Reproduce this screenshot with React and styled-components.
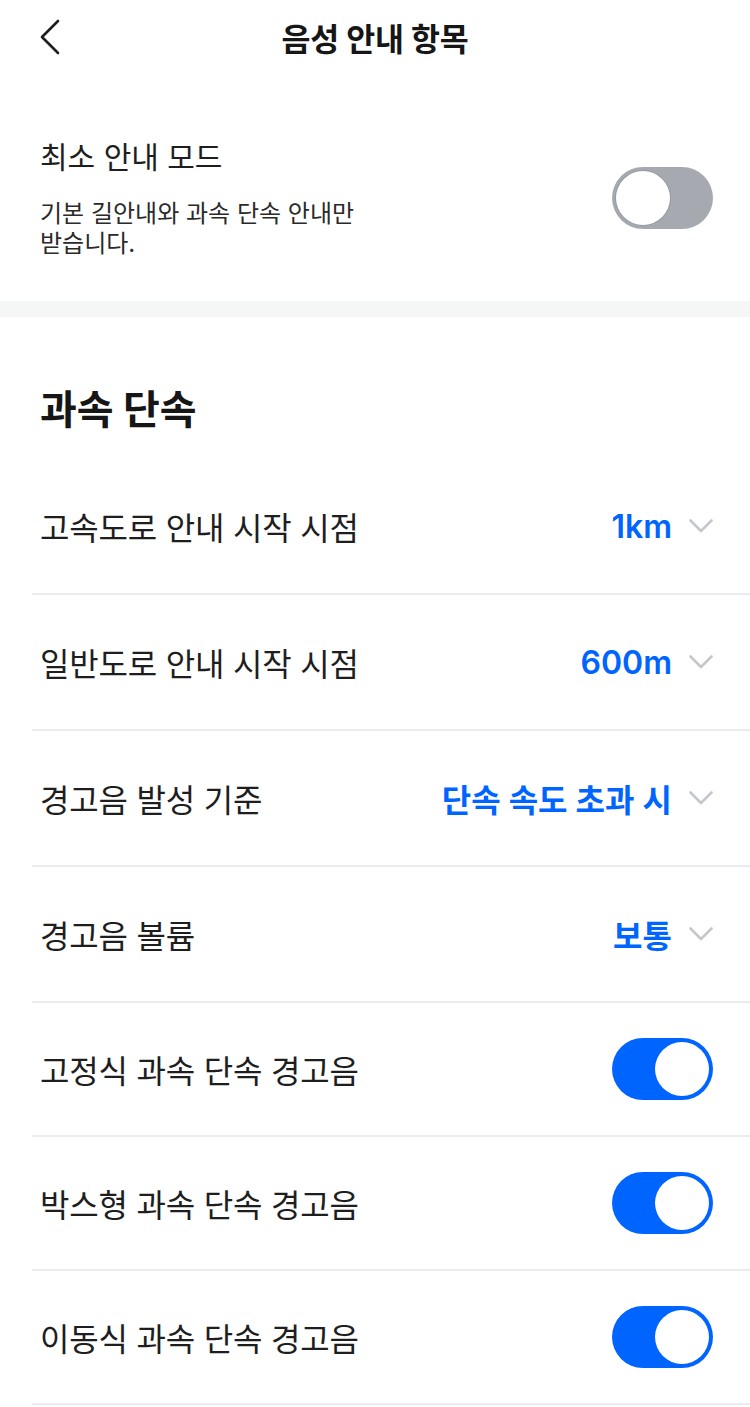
import React from "react";
import styled, { createGlobalStyle } from "styled-components";

const Global = createGlobalStyle`
  html, body { margin: 0; padding: 0; background: #ffffff; }
  body {
    font-family: "Inter", "Noto Sans CJK KR", "Noto Sans", sans-serif;
    color: #1c1c1e;
    -webkit-font-smoothing: antialiased;
    word-break: keep-all;
  }
  * { box-sizing: border-box; }
`;

const Page = styled.div`
  width: 750px;
  background: #ffffff;
`;

const Header = styled.header`
  position: relative;
  height: 74px;
  display: flex;
  align-items: center;
  justify-content: center;
`;

const BackButton = styled.button`
  position: absolute;
  left: 30px;
  top: 12px;
  width: 40px;
  height: 50px;
  padding: 0;
  border: 0;
  background: transparent;
  display: flex;
  align-items: center;
  justify-content: center;
`;

const Title = styled.h1`
  margin: 0;
  font-size: 31.5px;
  font-weight: 700;
  color: #161616;
  letter-spacing: -0.2px;
`;

const MinimalSection = styled.section`
  display: flex;
  align-items: center;
  justify-content: space-between;
  padding: 63px 37px 42px 40px;
`;

const MinimalText = styled.div`
  display: flex;
  flex-direction: column;
  gap: 22px;
`;

const MinimalTitle = styled.div`
  font-size: 30px;
  line-height: 40px;
  color: #1e1e1e;
`;

const MinimalDesc = styled.div`
  font-size: 24px;
  line-height: 30px;
  color: #2a2a2a;
  max-width: 350px;
  word-break: keep-all;
`;

const Band = styled.div`
  height: 16px;
  background: #f5f6f6;
`;

const SectionHeading = styled.h2`
  margin: 0;
  padding: 68px 40px 24px;
  font-size: 40px;
  line-height: 50px;
  font-weight: 700;
  color: #161616;
`;

const Row = styled.div`
  display: flex;
  align-items: center;
  justify-content: space-between;
  margin-left: 32px;
  padding: 0 37px 0 8px;
  height: ${(p) => (p.$toggle ? 134 : 136)}px;
  border-bottom: 2px solid #ebebf0;
`;

const RowLabel = styled.span`
  font-size: 32px;
  color: #1e1e1e;
  letter-spacing: -0.2px;
`;

const Select = styled.div`
  display: flex;
  align-items: center;
  gap: 17px;
`;

const Value = styled.span`
  font-size: 32px;
  font-weight: 600;
  color: #0064ff;
`;

const Track = styled.div`
  position: relative;
  width: 101px;
  height: 62px;
  border-radius: 31px;
  background: ${(p) => (p.$on ? "#0064ff" : "#a6aab0")};
  flex-shrink: 0;
`;

const Knob = styled.div`
  position: absolute;
  top: 4px;
  left: ${(p) => (p.$on ? "43px" : "4px")};
  width: 54px;
  height: 54px;
  border-radius: 50%;
  background: #ffffff;
  box-shadow: ${(p) => (p.$on ? "none" : "0 0 0 1px rgba(140,145,152,0.6)")};
`;

const Toggle = ({ on }) => (
  <Track $on={on}>
    <Knob $on={on} />
  </Track>
);

const Chevron = () => (
  <svg width="24" height="14" viewBox="0 0 24 14" fill="none">
    <path d="M1.5 1.5 L12 12 L22.5 1.5" stroke="#c4c8cc" strokeWidth="2.6" strokeLinecap="round" strokeLinejoin="round" />
  </svg>
);

const BackIcon = () => (
  <svg width="22" height="36" viewBox="0 0 22 36" fill="none">
    <path d="M19 2 L3 18 L19 34" stroke="#1e1e1e" strokeWidth="2.6" strokeLinecap="round" strokeLinejoin="round" />
  </svg>
);

const selects = [
  ["고속도로 안내 시작 시점", "1km"],
  ["일반도로 안내 시작 시점", "600m"],
  ["경고음 발성 기준", "단속 속도 초과 시"],
  ["경고음 볼륨", "보통"],
];

const toggles = ["고정식 과속 단속 경고음", "박스형 과속 단속 경고음", "이동식 과속 단속 경고음"];

export default function App() {
  return (
    <Page>
      <Global />
      <Header>
        <BackButton aria-label="뒤로">
          <BackIcon />
        </BackButton>
        <Title>음성 안내 항목</Title>
      </Header>
      <MinimalSection>
        <MinimalText>
          <MinimalTitle>최소 안내 모드</MinimalTitle>
          <MinimalDesc>기본 길안내와 과속 단속 안내만 받습니다.</MinimalDesc>
        </MinimalText>
        <Toggle on={false} />
      </MinimalSection>
      <Band />
      <SectionHeading>과속 단속</SectionHeading>
      {selects.map(([label, value]) => (
        <Row key={label}>
          <RowLabel>{label}</RowLabel>
          <Select>
            <Value>{value}</Value>
            <Chevron />
          </Select>
        </Row>
      ))}
      {toggles.map((label) => (
        <Row key={label} $toggle>
          <RowLabel>{label}</RowLabel>
          <Toggle on />
        </Row>
      ))}
    </Page>
  );
}
